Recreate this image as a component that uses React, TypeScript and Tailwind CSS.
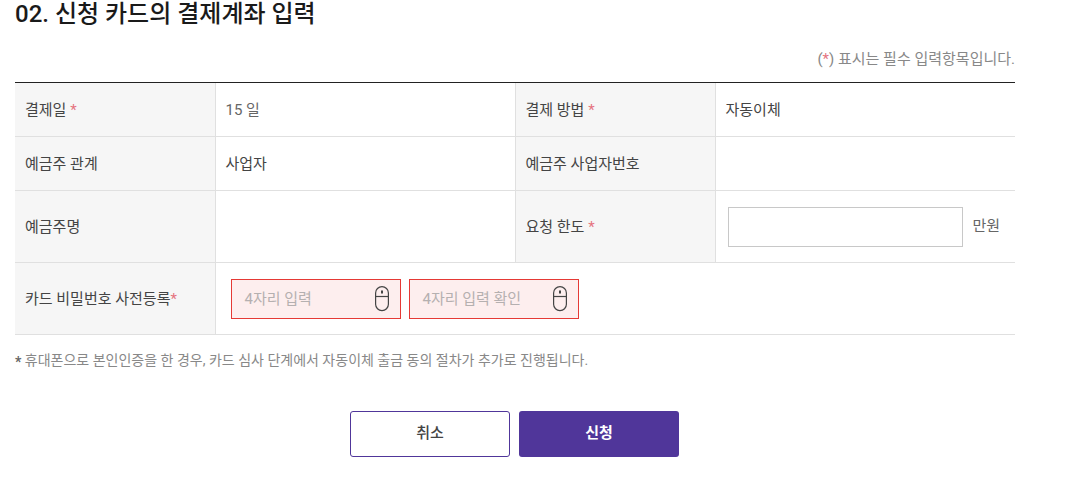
import React from 'react';

const fontStack = "font-['Roboto','Noto_Sans_CJK_KR',sans-serif]";

const Star = () => <span className="text-[#e5737f]"> *</span>;

const MouseIcon = () => (
  <svg width="14" height="26" viewBox="0 0 14 26" fill="none" stroke="#444444" strokeWidth="1.2" className="shrink-0">
    <rect x="0.6" y="0.6" width="12.8" height="24" rx="6.4" />
    <path d="M0.6 10.5H13.4" />
    <path d="M7 4.5V7.5" strokeWidth="2" />
  </svg>
);

const PinInput = ({ placeholder }: { placeholder: string }) => (
  <div className="flex h-10 w-[170px] items-center justify-between border border-[#e53935] bg-[#fdeeee] pl-[13px] pr-[11px]">
    <span className="pt-0.5 text-[15px] text-[#b5b0b0]">{placeholder}</span>
    <MouseIcon />
  </div>
);

const Label = ({ children }: { children: React.ReactNode }) => (
  <th className="border-b border-r border-[#e0e0e0] bg-[#f6f6f6] pl-2.5 text-left text-[15px] font-normal text-[#444444]">
    {children}
  </th>
);

export default function App() {
  return (
    <div className={`${fontStack} h-[490px] w-[1067px] overflow-hidden bg-white px-[15px]`}>
      <div className="w-[1000px]">
        <h2 className="h-[50px] text-2xl leading-[28px] font-medium text-[#1a1a1a]">02. 신청 카드의 결제계좌 입력</h2>
        <p className="h-[32px] text-right text-[15px] leading-[18px] text-[#888888]">
          (<span className="text-[#e5737f]">*</span>) 표시는 필수 입력항목입니다.
        </p>
        <div className="h-px bg-[#222222]"></div>
        <table className="w-[1000px] table-fixed border-collapse">
          <colgroup>
            <col className="w-[200px]" />
            <col className="w-[300px]" />
            <col className="w-[200px]" />
            <col className="w-[300px]" />
          </colgroup>
          <tbody>
            <tr className="h-[53px] [&>*]:pt-px">
              <Label>결제일<Star /></Label>
              <td className="border-b border-r border-[#e0e0e0] pl-2.5 text-[15px] text-[#666666]">15 일</td>
              <Label>결제 방법<Star /></Label>
              <td className="border-b border-[#e0e0e0] pl-2.5 text-[15px] text-[#444444]">자동이체</td>
            </tr>
            <tr className="h-[54px] [&>*]:pt-[3px]">
              <Label>예금주 관계</Label>
              <td className="border-b border-r border-[#e0e0e0] pl-2.5 text-[15px] text-[#444444]">사업자</td>
              <Label>예금주 사업자번호</Label>
              <td className="border-b border-[#e0e0e0]"></td>
            </tr>
            <tr className="h-[72px] [&>td]:pt-px [&>th]:pt-[3px]">
              <Label>예금주명</Label>
              <td className="border-b border-r border-[#e0e0e0]"></td>
              <Label>요청 한도<Star /></Label>
              <td className="border-b border-[#e0e0e0] pl-3">
                <div className="flex items-center gap-2.5">
                  <input type="text" className="h-10 w-[235px] border border-[#c8c8c8] bg-white" />
                  <span className="text-[15px] text-[#666666]">만원</span>
                </div>
              </td>
            </tr>
            <tr className="h-[72px] [&>td]:pt-px [&>th]:pt-[3px]">
              <Label>카드 비밀번호 사전등록<span className="text-[#e5737f]">*</span></Label>
              <td colSpan={3} className="border-b border-[#e0e0e0] pl-[15px]">
                <div className="flex items-center gap-2">
                  <PinInput placeholder="4자리 입력" />
                  <PinInput placeholder="4자리 입력 확인" />
                </div>
              </td>
            </tr>
          </tbody>
        </table>
        <p className="mt-4 text-sm leading-[18px] text-[#888888]">
          <span className="inline-block translate-y-0.5 font-bold text-[#666666]">*</span> 휴대폰으로 본인인증을 한 경우, 카드 심사 단계에서 자동이체 출금 동의 절차가 추가로 진행됩니다.
        </p>
        <div className="mt-[42px] mr-px flex justify-center gap-[9px]">
          <button className="h-[46px] w-40 rounded-[3px] border border-[#50369a] bg-white text-[15px] font-medium text-[#444444]">취소</button>
          <button className="h-[46px] w-40 rounded-[3px] bg-[#50369a] text-[15px] font-bold text-white">신청</button>
        </div>
      </div>
    </div>
  );
}
